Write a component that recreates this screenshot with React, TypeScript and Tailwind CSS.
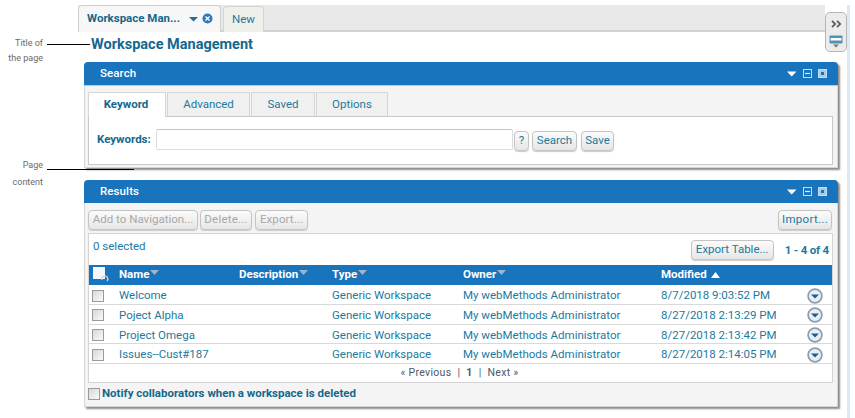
import React from "react";

const teal = "text-[#1b7a9e]";

function PanelHead({ title }: { title: string }) {
  return (
    <div className="h-[23px] bg-[#1874bd] rounded-t-[4px] flex items-center pl-[16px] pr-[10px] text-white text-[11.5px] font-medium tracking-[0.1px]">
      <span className="flex-1">{title}</span>
      <svg width="44" height="12" viewBox="0 0 44 12" className="shrink-0">
        <path d="M3 3.5h9.5L7.7 8.5z" fill="#fff" />
        <rect x="19.5" y="1.5" width="8" height="8" fill="#1874bd" stroke="#c4dcef" />
        <path d="M21 5.5h5" stroke="#e8f1f8" strokeWidth="1.2" />
        <rect x="34.5" y="1.5" width="8" height="8" fill="#a9cce6" stroke="#c4dcef" />
        <rect x="37" y="4" width="3" height="3" fill="#1874bd" />
      </svg>
    </div>
  );
}

function Btn({ children, disabled, className = "" }: { children: React.ReactNode; disabled?: boolean; className?: string }) {
  return (
    <div
      className={`h-[20px] px-[3px] shrink-0 flex items-center rounded-[4px] border border-[#c4c4c4] bg-gradient-to-b from-[#fbfbfb] to-[#e6e6e6] shadow-[0_1px_1px_#ccc] text-[11.5px] whitespace-nowrap ${
        disabled ? "text-[#a8a8a8]" : "text-[#1b7a9e]"
      } ${className}`}
    >
      {children}
    </div>
  );
}

function Tab({ label, active, w }: { label: string; active?: boolean; w: string }) {
  return (
    <div
      className={`h-[24px] ${w} flex items-center justify-center border border-b-0 border-[#d6d6d6] text-[11.5px] ${
        active ? "bg-white font-bold text-[#14688c] h-[25px] -mb-px relative pr-[2px]" : "bg-[#f0f0f0] text-[#1b7a9e]"
      }`}
    >
      {label}
    </div>
  );
}

function Check({ className = "" }: { className?: string }) {
  return <div className={`w-[12px] h-[12px] border border-[#9a9a9a] bg-gradient-to-br from-[#d8d8d8] to-[#fafafa] ${className}`} />;
}

const rows = [
  ["Welcome", "8/7/2018 9:03:52 PM"],
  ["Poject Alpha", "8/27/2018 2:13:29 PM"],
  ["Project Omega", "8/27/2018 2:13:42 PM"],
  ["Issues--Cust#187", "8/27/2018 2:14:05 PM"],
];

function SortTri() {
  return (
    <svg width="9" height="6" viewBox="0 0 9 6" className="inline-block ml-[1px] mb-[5px]">
      <path d="M0 0h9L4.5 5z" fill="#9fb4c6" />
    </svg>
  );
}

function RowMenu() {
  return (
    <svg width="16" height="16" viewBox="0 0 16 16">
      <circle cx="8" cy="8" r="6.9" fill="#e9eef3" stroke="#8d9db0" strokeWidth="1.7" />
      <path d="M4 6.5h8L8 10.5z" fill="#1c5f92" />
    </svg>
  );
}

const colGrid = "grid grid-cols-[30px_120px_93px_131px_198px_146px_1fr]";

export default function App() {
  return (
    <div className="relative w-[855px] h-[418px] bg-white overflow-hidden flex pt-[5px] [font-family:Roboto,'Liberation_Sans',sans-serif]">
      {/* annotations */}
      <div className="w-[78px] shrink-0 text-[9px] text-[#6a6a6a] leading-[15px] text-right pr-[35px] pt-[31px]">
        <div>Title of</div>
        <div className="whitespace-nowrap">the page</div>
        <div className="mt-[92px]">Page</div>
        <div className="mt-[2px]">content</div>
      </div>
      <div className="absolute left-[47px] top-[44px] w-[43px] h-px bg-black" />
      <div className="absolute left-[47px] top-[169px] w-[87px] h-px bg-black" />

      <div className="w-[769px] shrink-0 flex flex-col">
        {/* tab bar */}
        <div className="h-[27px] bg-[#e9e9e9] border-b-2 border-[#d2d2d2] flex items-end mr-[22px]">
          <div className="h-[27px] -mb-[2px] w-[143px] bg-[#f7f7f7] border border-b-0 border-[#cfcfcf] rounded-t-[4px] flex items-center pl-[8px] text-[11.5px] font-bold text-[#14688c] relative">
            <span className="flex-1 whitespace-nowrap">Workspace Man...</span>
            <svg width="26" height="12" viewBox="0 0 26 12" className="mr-[6px]">
              <path d="M1 4h9L5.5 8.5z" fill="#2a6b94" />
              <circle cx="19.5" cy="5.5" r="5" fill="#2f79b8" />
              <path d="M17.5 3.5l4 4M21.5 3.5l-4 4" stroke="#fff" strokeWidth="1.3" />
            </svg>
          </div>
          <div className="h-[26px] -mb-[2px] w-[41px] ml-[2px] bg-[#f0f0ea] border border-b-0 border-[#d4d4d4] rounded-t-[4px] flex items-center justify-center text-[11.5px] text-[#1b7a9e]">
            New
          </div>
        </div>
        {/* title */}
        <div className="h-[25px] pl-[13px] flex items-center text-[14.5px] font-bold text-[#14688c] leading-none pt-[1px]">
          Workspace Management
        </div>

        {/* search panel */}
        <div className="ml-[6px] w-[754px] mt-[5px] shadow-[2px_2px_2px_#8c8c8c] rounded-t-[4px]">
          <PanelHead title="Search" />
          <div className="h-[83px] bg-[#f4f4f4] border-x border-b border-t border-[#d6d6d6] border-t-[#a9cfe8] px-[3px] pt-[6px]">
            <div className="flex gap-[1px] h-[24px] items-end relative">
              <Tab label="Keyword" active w="w-[78px]" />
              <Tab label="Advanced" w="w-[83px]" />
              <Tab label="Saved" w="w-[64px]" />
              <Tab label="Options" w="w-[72px]" />
            </div>
            <div className="h-[49px] bg-white border border-[#c9c9c9] flex items-center pl-[8px] pb-[2px] mr-[1px]">
              <span className="text-[11.5px] font-bold text-[#14688c] w-[59px] whitespace-nowrap">Keywords:</span>
              <div className="w-[357px] h-[21px] border border-[#dcdcdc] border-t-[#c4c4c4] bg-white rounded-[2px]" />
              <Btn className="ml-[1px] w-[15px] justify-center !px-0 mt-[2px]">?</Btn>
              <Btn className="ml-[3px] w-[45px] justify-center !px-0 mt-[2px]">Search</Btn>
              <Btn className="ml-[4px] w-[33px] justify-center !px-0 mt-[2px]">Save</Btn>
            </div>
          </div>
        </div>

        {/* results panel */}
        <div className="ml-[6px] w-[754px] mt-[12px] shadow-[2px_2px_2px_#8c8c8c] rounded-t-[4px]">
          <PanelHead title="Results" />
          <div className="h-[204px] bg-[#f4f4f4] border-x border-b border-[#d6d6d6] px-[3px] pt-[7px]">
            <div className="flex h-[20px] pr-[2px] text-[11.5px]">
              <Btn disabled className="w-[110px] justify-center !px-0">Add to Navigation...</Btn>
              <Btn disabled className="ml-[2px] w-[52px] justify-center !px-0 tracking-[0.2px]">Delete...</Btn>
              <Btn disabled className="ml-[3px] w-[53px] justify-center !px-0 tracking-[0.1px]">Export...</Btn>
              <Btn className="ml-auto w-[54px] justify-center !px-0 tracking-[0.3px]">Import...</Btn>
            </div>
            <div className="mt-[3px] h-[150px] bg-white border border-[#d4d4d4] mr-[1px]">
              <div className="h-[31px] flex items-start pl-[4px] pr-[3px] relative">
                <span className={`text-[11.5px] ${teal} mt-[4px]`}>0 selected</span>
                <Btn className="ml-auto mt-[6px] px-[4px]">Export Table...</Btn>
                <span className={`text-[11.5px] font-bold ${teal} ml-[11px] mt-[8px] tracking-[-0.2px]`}>1 - 4 of 4</span>
              </div>
              <div className={`${colGrid} h-[20px] bg-[#1874bd] items-center text-white text-[11.5px] font-bold`}>
                <svg width="18" height="18" viewBox="0 0 18 18" className="ml-[3px]">
                  <rect x="1" y="1" width="12" height="12" fill="#f4f7fa" />
                  <path d="M10 14a3 3 0 1 1 5 1" stroke="#c9d9e6" fill="none" strokeWidth="1.3" />
                </svg>
                <span>Name<SortTri /></span>
                <span className="whitespace-nowrap">Description<SortTri /></span>
                <span>Type<SortTri /></span>
                <span>Owner<SortTri /></span>
                <span className="col-span-2 flex items-center gap-[4px]">
                  Modified
                  <svg width="9" height="6" viewBox="0 0 9 6"><path d="M0 6h9L4.5 0z" fill="#fff" /></svg>
                </span>
              </div>
              {rows.map(([name, date]) => (
                <div key={name} className={`${colGrid} h-[19.75px] border-b border-[#d9d9d9] items-center text-[11.5px] ${teal} pt-[2px]`}>
                  <Check className="ml-[3px]" />
                  <span>{name}</span>
                  <span />
                  <span className="whitespace-nowrap">Generic Workspace</span>
                  <span className="whitespace-nowrap">My webMethods Administrator</span>
                  <span className="whitespace-nowrap">{date}</span>
                  <RowMenu />
                </div>
              ))}
              <div className="h-[18px] flex items-center justify-center text-[10.5px] text-[#4a5a66] tracking-[0.3px] gap-[6px] pr-[2px]">
                <span>« Previous</span>
                <span>|</span>
                <span className="font-bold">1</span>
                <span>|</span>
                <span>Next »</span>
              </div>
            </div>
            <div className="flex items-center h-[20px] mt-[1px]">
              <Check className="mr-[2px]" />
              <span className="text-[11.5px] font-bold text-[#14688c]">Notify collaborators when a workspace is deleted</span>
            </div>
          </div>
        </div>
      </div>

      {/* right strip */}
      <div className="w-[3px] bg-[#dbe8f5] shrink-0" />

      {/* flyout controls */}
      <div className="absolute left-[825px] top-[12px] w-[22px] h-[40px] bg-[#ececec] border border-[#b5b5b5] rounded-[5px] flex flex-col items-center pt-[7px]">
        <svg width="11" height="8" viewBox="0 0 11 8">
          <path d="M1 .8l3.2 3.2L1 7.2M6 .8l3.2 3.2L6 7.2" stroke="#5f5f5f" strokeWidth="1.8" fill="none" />
        </svg>
        <svg width="14" height="13" viewBox="0 0 14 13" className="mt-[7px]">
          <rect x="0.5" y="0.5" width="13" height="8" fill="#4b92bd" rx="1" />
          <rect x="1.5" y="3" width="11" height="2.5" fill="#fff" />
          <path d="M4 9.5h6l-3 3z" fill="#777" />
        </svg>
      </div>
    </div>
  );
}
